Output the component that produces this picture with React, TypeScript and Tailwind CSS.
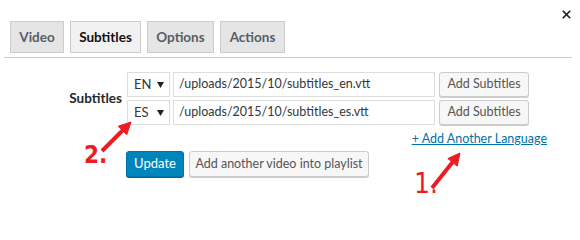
import { X } from 'lucide-react';

const FONT = "Lato, 'Open Sans', sans-serif";
const NARROW = "'Liberation Sans Narrow', 'DejaVu Sans Condensed', 'Liberation Sans', sans-serif";

const TABS = [
  { label: 'Video', active: false, width: 'w-[54px]' },
  { label: 'Subtitles', active: true, width: 'w-[71px]' },
  { label: 'Options', active: false, width: 'w-[67px]' },
  { label: 'Actions', active: false, width: 'w-[65px]' },
];

const SUBTITLES = [
  { lang: 'EN', path: '/uploads/2015/10/subtitles_en.vtt' },
  { lang: 'ES', path: '/uploads/2015/10/subtitles_es.vtt' },
];

function Arrow({ x1, y1, x2, y2 }: { x1: number; y1: number; x2: number; y2: number }) {
  const angle = Math.atan2(y2 - y1, x2 - x1);
  const head = 12;
  const half = 6;
  const bx = x2 - Math.cos(angle) * head;
  const by = y2 - Math.sin(angle) * head;
  const nx = -Math.sin(angle) * half;
  const ny = Math.cos(angle) * half;
  return (
    <g fill="#ec1c24" stroke="#ec1c24">
      <line x1={x1} y1={y1} x2={bx} y2={by} strokeWidth={4} />
      <polygon points={`${x2},${y2} ${bx + nx},${by + ny} ${bx - nx},${by - ny}`} strokeWidth={1} />
    </g>
  );
}

export default function App() {
  return (
    <div className="relative h-[210px] w-[580px] overflow-hidden bg-white pt-[21px]" style={{ fontFamily: FONT }}>
      <button type="button" className="absolute right-[7px] top-[8px] text-[#222]" aria-label="Close">
        <X size={13} strokeWidth={3.2} />
      </button>

      <div className="ml-[10px] flex gap-[6px]">
        {TABS.map((tab) => (
          <div
            key={tab.label}
            className={
              (tab.active
                ? 'bg-[#f1f1f1] text-[#111111] '
                : 'bg-[#e5e5e5] text-[#555d66] ') +
              tab.width +
              ' flex h-[32px] items-center justify-center whitespace-nowrap border border-[#cccccc] text-[13.5px] font-bold'
            }
          >
            {tab.label}
          </div>
        ))}
      </div>
      <div className="ml-[4px] mr-[8px] mt-[4px] border-t border-[#cccccc]" />

      <div className="mt-[14px] flex items-center">
        <div className="w-[122px] text-right text-[13.5px] font-bold text-[#23282d]">Subtitles</div>
        <div className="ml-[5px] flex flex-col gap-[3px]">
          {SUBTITLES.map((row) => (
            <div key={row.lang} className="flex items-center">
              <div className="flex h-[25px] w-[43px] items-center justify-between border border-[#dddddd] pl-[6px] pr-[5px] text-[13px] text-[#32373c]">
                <span>{row.lang}</span>
                <svg width="7" height="6" viewBox="0 0 7 6">
                  <path d="M0 0 H7 L3.5 6 Z" fill="#222" />
                </svg>
              </div>
              <div className="ml-[3px] flex h-[25px] w-[262px] items-center whitespace-nowrap border border-[#dddddd] pl-[5px] text-[12.5px] text-[#32373c]">
                {row.path}
              </div>
              <button
                type="button"
                className="ml-[4px] h-[25px] w-[90px] whitespace-nowrap rounded-[3px] border border-[#cccccc] bg-[#f7f7f7] text-[12.5px] text-[#555555] shadow-[0_1px_0_#cccccc]"
              >
                Add Subtitles
              </button>
            </div>
          ))}
        </div>
      </div>

      <div className="mt-[6px] flex w-[547px] justify-end">
        <a href="#" className="whitespace-nowrap text-[12.5px] leading-[16px] text-[#0073aa] underline">
          + Add Another Language
        </a>
      </div>

      <div className="ml-[126px] mt-[4px] flex gap-[5px]">
        <button
          type="button"
          className="h-[26px] w-[58px] rounded-[3px] border border-[#0073aa] bg-[#0085ba] text-[13px] text-white shadow-[0_1px_0_#006799]"
        >
          Update
        </button>
        <button
          type="button"
          className="h-[26px] w-[180px] whitespace-nowrap rounded-[3px] border border-[#cccccc] bg-[#f7f7f7] text-[12.5px] text-[#555555] shadow-[0_1px_0_#cccccc]"
        >
          Add another video into playlist
        </button>
      </div>

      <svg className="pointer-events-none absolute left-0 top-0" width="580" height="210">
        <Arrow x1={102} y1={151} x2={131} y2={122} />
        <Arrow x1={432} y1={188} x2={460} y2={153} />
      </svg>
      <span
        className="absolute left-[84px] top-[140px] text-[24px] font-bold leading-[30px] text-[#ec1c24]"
        style={{ fontFamily: NARROW }}
      >
        2.
      </span>
      <span
        className="absolute left-[414px] top-[167px] text-[28px] leading-[34px] text-[#ec1c24]"
        style={{ fontFamily: NARROW }}
      >
        1.
      </span>
    </div>
  );
}
